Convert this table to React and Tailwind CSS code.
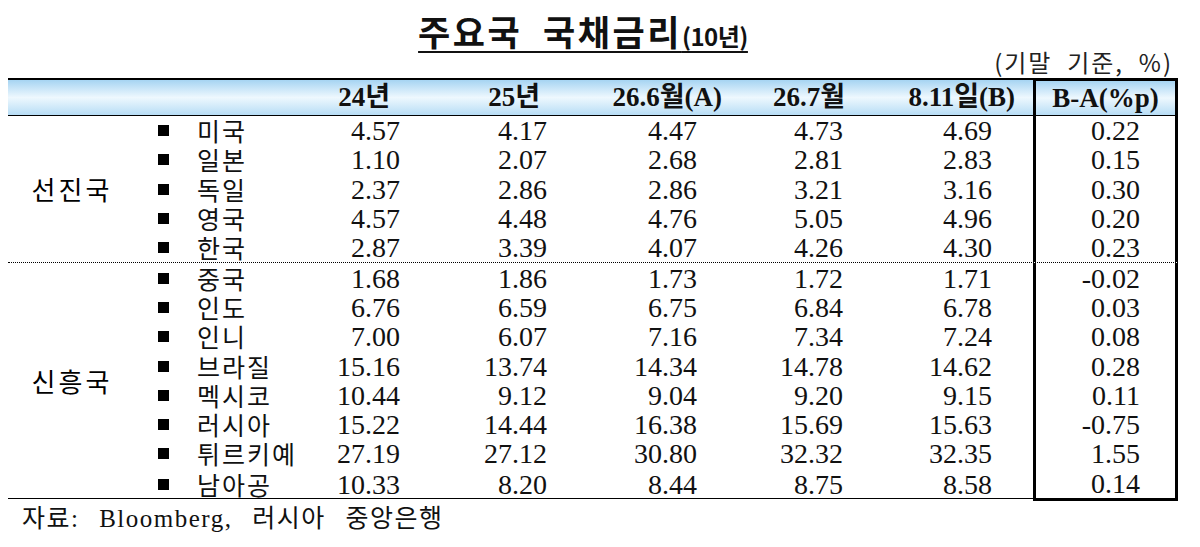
import React from 'react';

const serif = { fontFamily: '"Liberation Serif", "Noto Sans CJK KR", serif' };
const sans = { fontFamily: '"Noto Sans CJK KR", "Noto Sans", sans-serif' };

const groups = [
  {
    name: '선진국',
    rows: [
      ['미국', '4.57', '4.17', '4.47', '4.73', '4.69', '0.22'],
      ['일본', '1.10', '2.07', '2.68', '2.81', '2.83', '0.15'],
      ['독일', '2.37', '2.86', '2.86', '3.21', '3.16', '0.30'],
      ['영국', '4.57', '4.48', '4.76', '5.05', '4.96', '0.20'],
      ['한국', '2.87', '3.39', '4.07', '4.26', '4.30', '0.23'],
    ],
  },
  {
    name: '신흥국',
    rows: [
      ['중국', '1.68', '1.86', '1.73', '1.72', '1.71', '-0.02'],
      ['인도', '6.76', '6.59', '6.75', '6.84', '6.78', '0.03'],
      ['인니', '7.00', '6.07', '7.16', '7.34', '7.24', '0.08'],
      ['브라질', '15.16', '13.74', '14.34', '14.78', '14.62', '0.28'],
      ['멕시코', '10.44', '9.12', '9.04', '9.20', '9.15', '0.11'],
      ['러시아', '15.22', '14.44', '16.38', '15.69', '15.63', '-0.75'],
      ['튀르키예', '27.19', '27.12', '30.80', '32.32', '32.35', '1.55'],
      ['남아공', '10.33', '8.20', '8.44', '8.75', '8.58', '0.14'],
    ],
  },
];

// 헤더 라벨 (오른쪽 끝 위치 맞춤)
const Header = () => (
  <div className="flex">
    <div className="w-[1025px] h-[38px] border-t-2 border-b border-black bg-linear-to-b from-[#a6d4f2] via-[#eef8fe] to-[#b7ddf5] grid grid-cols-[292px_100px_150px_180px_125px_178px] items-center text-[27px] leading-none font-bold text-[#111]">
      <div />
      <div className="text-right pr-[10px]">24년</div>
      <div className="text-right pr-[10px]">25년</div>
      <div className="text-right pr-[8px]">26.6월(A)</div>
      <div className="text-right pr-[10px]">26.7월</div>
      <div className="text-right pr-[18px]">8.11일(B)</div>
    </div>
    <div className="w-[145px] h-[38px] border-t-[3px] border-x-[3px] border-b border-black bg-linear-to-b from-[#a6d4f2] via-[#eef8fe] to-[#b7ddf5] flex items-center justify-center text-[27px] leading-none font-bold text-[#111]">
      B-A(%p)
    </div>
  </div>
);

const Row = ({ row, last }) => (
  <div className="grid grid-cols-[139px_125px_149px_150px_148px_186px_145px] h-[29.3px] items-center text-[28px] leading-[29px] text-[#111]">
    <div className="flex items-center pl-[22px] h-full">
      <div className="w-[11px] h-[11px] bg-black shrink-0" />
      <span className="ml-[28px] shrink-0 whitespace-nowrap text-[25px] leading-[29px] tracking-[2px]" style={sans}>
        {row[0]}
      </span>
    </div>
    <div className="text-right">{row[1]}</div>
    <div className="text-right pr-[2px]">{row[2]}</div>
    <div className="text-right pr-[2px]">{row[3]}</div>
    <div className="text-right pr-[4px]">{row[4]}</div>
    <div className="text-right pr-[41px]">{row[5]}</div>
    <div
      className={`h-full flex items-center justify-end pr-[35px] border-x-[3px] border-black ${
        last ? 'border-b-[3px]' : ''
      }`}
    >
      {row[6]}
    </div>
  </div>
);

const Group = ({ group, index }) => (
  <div
    className={`flex ${
      index === 0 ? 'border-b border-dotted border-black' : 'border-b border-black'
    }`}
  >
    <div
      className="w-[128px] flex items-center justify-center text-[26px] leading-none tracking-[3px]"
      style={sans}
    >
      {group.name}
    </div>
    <div className="flex flex-col">
      {group.rows.map((row, i) => (
        <Row key={row[0]} row={row} last={index === 1 && i === group.rows.length - 1} />
      ))}
    </div>
  </div>
);

export default function App() {
  return (
    <div className="w-[1200px] h-[547px] bg-white overflow-hidden" style={serif}>
      {/* 제목 */}
      <div className="h-[48px] pt-[11px] flex justify-center">
        <div
          className="h-[40px] leading-[40px] font-bold text-[#111] underline decoration-2 underline-offset-[5px] ml-[-34px] whitespace-nowrap"
          style={sans}
        >
          <span className="text-[35px] tracking-[2.5px]">주요국&nbsp;&nbsp;국채금리</span>
          <span className="text-[24px] tracking-[-0.5px]">(10년)</span>
        </div>
      </div>

      <div
        className="h-[30px] leading-[28px] text-right pr-[27px] text-[24px] tracking-[2px] text-[#222]"
        style={sans}
      >
        (기말&nbsp;&nbsp;기준,&nbsp;&nbsp;%)
      </div>

      <div className="ml-[8px] w-[1170px]">
        <Header />
        {groups.map((g, i) => (
          <Group key={g.name} group={g} index={i} />
        ))}
      </div>

      <div className="mt-[6px] pl-[22px] leading-[28px] text-[25px] tracking-[1.5px] [word-spacing:12px] text-[#111]">
        자료: Bloomberg, 러시아 중앙은행
      </div>
    </div>
  );
}
